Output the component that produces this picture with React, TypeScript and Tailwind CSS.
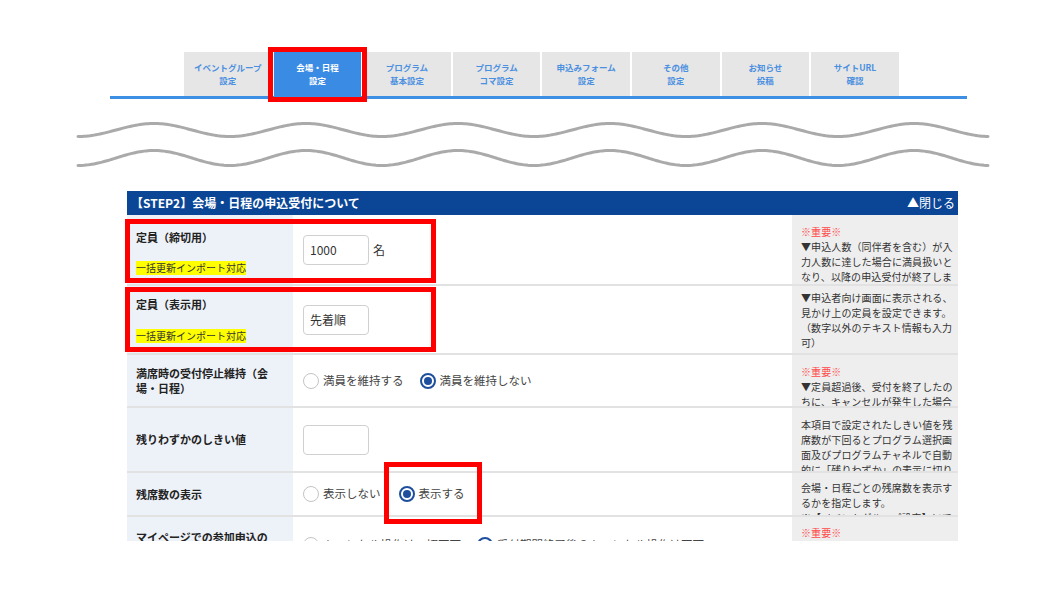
import React from "react";

const FONT = { fontFamily: '"Noto Sans CJK JP", "Noto Sans", sans-serif' };

const tabs: [string, string][] = [
  ["イベントグループ", "設定"],
  ["会場・日程", "設定"],
  ["プログラム", "基本設定"],
  ["プログラム", "コマ設定"],
  ["申込みフォーム", "設定"],
  ["その他", "設定"],
  ["お知らせ", "投稿"],
  ["サイトURL", "確認"],
];

function wavePath(c: number, a: number) {
  const pts: string[] = [];
  for (let x = 78; x <= 988; x += 2) {
    const y = c + a * Math.cos((2 * Math.PI * (x - 78)) / 152);
    pts.push(`${x},${y.toFixed(2)}`);
  }
  return "M" + pts.join(" L");
}

function Radio({ checked, label }: { checked?: boolean; label: string }) {
  return (
    <div className="flex items-center gap-[4px]">
      {checked ? (
        <div className="w-[16px] h-[16px] rounded-full border-2 border-[#1d4f9e] bg-white flex items-center justify-center">
          <div className="w-[8px] h-[8px] rounded-full bg-[#1d4f9e]" />
        </div>
      ) : (
        <div className="w-[16px] h-[16px] rounded-full border-[1.5px] border-[#c4c4c4] bg-white" />
      )}
      <span className="text-[11.5px] text-[#444] whitespace-nowrap">{label}</span>
    </div>
  );
}

function Input({ value }: { value?: string }) {
  return (
    <div className="w-[66px] h-[30px] rounded-[4px] border border-[#d0d0d0] bg-white flex items-center pl-[6px] text-[12px] text-[#333]">
      {value}
    </div>
  );
}

function Highlight() {
  return (
    <span className="inline-block bg-[#ffff00] text-[10px] leading-[14px] text-[#333] font-normal">
      一括更新インポート対応
    </span>
  );
}

function Note({ lines, pt }: { lines: { t: string; red?: boolean }[]; pt: string }) {
  return (
    <div className={`w-[166px] bg-[#eeeeee] pl-[9px] overflow-hidden text-[10px] tracking-[0.1px] leading-[15px] text-[#333] ${pt}`}>
      {lines.map((l, i) => (
        <div key={i} className={`whitespace-nowrap ${l.red ? "text-[#ff4a4a]" : ""}`}>
          {l.t}
        </div>
      ))}
    </div>
  );
}

export default function App() {
  return (
    <div className="w-[1056px] h-[616px] bg-white relative overflow-hidden" style={FONT}>
      {/* Tabs */}
      <div className="pt-[52px] ml-[110px] w-[857px]">
        <div className="flex pl-[74px] gap-[2px]">
          {tabs.map((t, i) => (
            <div
              key={i}
              className={`w-[87.6px] h-[44px] flex flex-col items-center justify-center text-[8.5px] font-bold leading-[13px] ${
                i === 1 ? "bg-[#3a8be4] text-white" : "bg-[#e6e6e6] text-[#4a8fe0]"
              }`}
            >
              <span>{t[0]}</span>
              <span>{t[1]}</span>
            </div>
          ))}
        </div>
        <div className="h-[3px] bg-[#3d8fe3]" />
      </div>

      {/* Waves */}
      <svg width="1056" height="92" className="block">
        <path d={wavePath(31, 6.5)} fill="none" stroke="#aaaaaa" strokeWidth="3" strokeLinecap="round" />
        <path d={wavePath(59, 7.5)} fill="none" stroke="#aaaaaa" strokeWidth="3" strokeLinecap="round" />
      </svg>

      {/* Panel */}
      <div className="ml-[127px] w-[831px] h-[350px] overflow-hidden">
        <div className="h-[24px] bg-[#0a4596] flex items-center justify-between pl-[4px] pr-[3px] text-white text-[12px] font-bold">
          <span>【STEP2】会場・日程の申込受付について</span>
          <span className="font-normal">▲閉じる</span>
        </div>

        {/* Row 1 */}
        <div className="flex h-[71px] border-b-2 border-[#e2e2e2]">
          <div className="w-[166px] bg-[#edf1f8] pl-[9px] pr-[20px] pt-[15px] flex flex-col gap-[14px]">
            <span className="text-[11px] font-bold text-[#222] leading-[14px]">定員（締切用）</span>
            <div className="leading-[14px]"><Highlight /></div>
          </div>
          <div className="flex-1 pl-[10px] flex items-center gap-[4px]">
            <Input value="1000" />
            <span className="text-[12px] text-[#333]">名</span>
          </div>
          <Note
            pt="pt-[9px]"
            lines={[
              { t: "※重要※", red: true },
              { t: "▼申込人数（同伴者を含む）が入" },
              { t: "力人数に達した場合に満員扱いと" },
              { t: "なり、以降の申込受付が終了しま" },
              { t: "す。" },
            ]}
          />
        </div>

        {/* Row 2 */}
        <div className="flex h-[69px] border-b-2 border-[#e2e2e2]">
          <div className="w-[166px] bg-[#edf1f8] pl-[9px] pr-[20px] pt-[11px] flex flex-col gap-[15px]">
            <span className="text-[11px] font-bold text-[#222] leading-[14px]">定員（表示用）</span>
            <div className="leading-[14px]"><Highlight /></div>
          </div>
          <div className="flex-1 pl-[10px] flex items-center">
            <Input value="先着順" />
          </div>
          <Note
            pt="pt-[4px]"
            lines={[
              { t: "▼申込者向け画面に表示される、" },
              { t: "見かけ上の定員を設定できます。" },
              { t: "（数字以外のテキスト情報も入力" },
              { t: "可）" },
            ]}
          />
        </div>

        {/* Row 3 */}
        <div className="flex h-[53px] border-b-2 border-[#e2e2e2]">
          <div className="w-[166px] bg-[#edf1f8] pl-[9px] pr-[20px] flex items-center">
            <span className="text-[11px] font-bold text-[#222] leading-[15px]">満席時の受付停止維持（会場・日程）</span>
          </div>
          <div className="flex-1 pl-[10px] flex items-center gap-[16px]">
            <Radio label="満員を維持する" />
            <Radio checked label="満員を維持しない" />
          </div>
          <Note
            pt="pt-[9px]"
            lines={[
              { t: "※重要※", red: true },
              { t: "▼定員超過後、受付を終了したの" },
              { t: "ちに、キャンセルが発生した場合" },
              { t: "も満員の状態を維持します。" },
            ]}
          />
        </div>

        {/* Row 4 */}
        <div className="flex h-[65px] border-b-2 border-[#e2e2e2]">
          <div className="w-[166px] bg-[#edf1f8] pl-[9px] pr-[20px] flex items-center">
            <span className="text-[11px] font-bold text-[#222] leading-[15px]">残りわずかのしきい値</span>
          </div>
          <div className="flex-1 pl-[10px] flex items-center">
            <Input />
          </div>
          <Note
            pt="pt-[9px]"
            lines={[
              { t: "本項目で設定されたしきい値を残" },
              { t: "席数が下回るとプログラム選択画" },
              { t: "面及びプログラムチャネルで自動" },
              { t: "的に「残りわずか」の表示に切り" },
              { t: "替わります。" },
            ]}
          />
        </div>

        {/* Row 5 */}
        <div className="flex h-[44px] border-b-2 border-[#e2e2e2]">
          <div className="w-[166px] bg-[#edf1f8] pl-[9px] pr-[20px] flex items-center">
            <span className="text-[11px] font-bold text-[#222] leading-[15px]">残席数の表示</span>
          </div>
          <div className="flex-1 pl-[10px] flex items-center gap-[18px]">
            <Radio label="表示しない" />
            <Radio checked label="表示する" />
          </div>
          <Note
            pt="pt-[7px]"
            lines={[
              { t: "会場・日程ごとの残席数を表示す" },
              { t: "るかを指定します。" },
              { t: "※【イベントグループ設定】にて" },
            ]}
          />
        </div>

        {/* Row 6 */}
        <div className="flex h-[58px] border-b-2 border-[#e2e2e2]">
          <div className="w-[166px] bg-[#edf1f8] pl-[9px] pr-[20px] flex items-center">
            <span className="text-[11px] font-bold text-[#222] leading-[15px]">マイページでの参加申込のキャンセル</span>
          </div>
          <div className="flex-1 pl-[10px] flex items-center gap-[16px]">
            <Radio label="キャンセル操作は一切不可" />
            <Radio checked label="受付期間終了後のキャンセル操作は不可" />
          </div>
          <Note pt="pt-[8px]" lines={[{ t: "※重要※", red: true }, { t: "▼" }]} />
        </div>
      </div>

      {/* Red annotation boxes */}
      <div className="absolute left-[268px] top-[47px] w-[99px] h-[55px] border-[5px] border-[#ff0000]" />
      <div className="absolute left-[125px] top-[219px] w-[311px] h-[64px] border-[5px] border-[#ff0000]" />
      <div className="absolute left-[125px] top-[287px] w-[311px] h-[65px] border-[5px] border-[#ff0000]" />
      <div className="absolute left-[384px] top-[462px] w-[98px] h-[62px] border-[5px] border-[#ff0000]" />
    </div>
  );
}
